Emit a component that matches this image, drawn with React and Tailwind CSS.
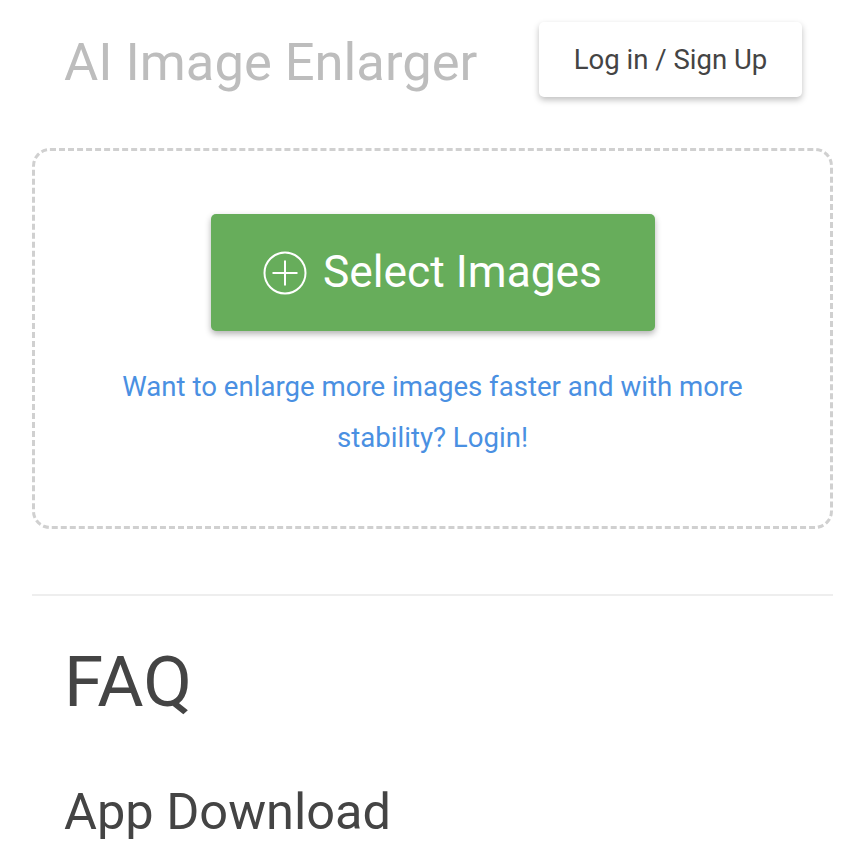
import React from "react";

export default function App() {
  return (
    <div className="w-[863px] min-h-[864px] bg-white overflow-hidden" style={{ fontFamily: "Roboto, sans-serif" }}>
      <div className="pl-[32px] pr-[30px]">
        <header className="flex items-center justify-between pt-[22px] pl-[32px] pr-[31px]">
          <h1 className="text-[52.5px] leading-none text-[#bdbdbd] font-normal mt-[6px]">AI Image Enlarger</h1>
          <button className="w-[263px] h-[75px] bg-white rounded-[5px] shadow-[0_3px_6px_rgba(0,0,0,0.25)] text-[27.5px] text-[#444]">
            Log in / Sign Up
          </button>
        </header>
        <section className="mt-[51px] h-[381px] border-[3px] border-dashed border-[#d0d0d0] rounded-[18px] flex flex-col items-center pt-[63px]">
          <button className="w-[444px] h-[117px] bg-[#67ad5b] rounded-[5px] shadow-[0_3px_6px_rgba(0,0,0,0.3)] flex items-center justify-center gap-[16px] text-white text-[44.3px]">
            <svg width="44" height="44" viewBox="0 0 44 44" fill="none" stroke="white" strokeWidth="2">
              <circle cx="22" cy="22" r="20.5" />
              <path d="M22 9.5v25M9.5 22h25" />
            </svg>
            <span>Select Images</span>
          </button>
          <p className="mt-[30px] text-center text-[27.6px] leading-[51px] text-[#4a90e2] w-[700px]">
            Want to enlarge more images faster and with more stability? Login!
          </p>
        </section>
        <div className="mt-[65px] h-[2px] bg-[#eeeeee]" />
        <h2 className="mt-[50px] pl-[32px] text-[71px] leading-none text-[#444] font-normal">FAQ</h2>
        <h3 className="mt-[70px] pl-[32px] text-[50.5px] leading-none text-[#444] font-normal">App Download</h3>
      </div>
    </div>
  );
}
